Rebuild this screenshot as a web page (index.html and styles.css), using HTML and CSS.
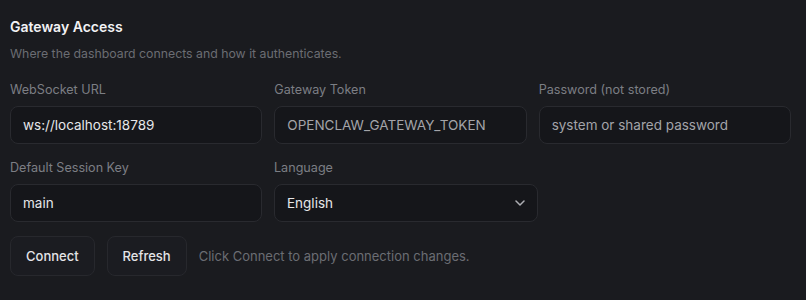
FILE: index.html
```html
<!DOCTYPE html>
<html lang="en">

<head>
    <meta charset="UTF-8">
    <meta name="viewport" content="width=device-width, initial-scale=1.0">
    <title>Gateway Access</title>
    <link rel="stylesheet" href="styles.css">
</head>

<body>
    <section class="card">
        <h2 class="card-title">Gateway Access</h2>
        <p class="card-sub">Where the dashboard connects and how it authenticates.</p>

        <div class="form-grid">
            <label class="field">
                <span class="field-label">WebSocket URL</span>
                <input type="text" value="ws://localhost:18789">
            </label>
            <label class="field">
                <span class="field-label">Gateway Token</span>
                <input type="text" placeholder="OPENCLAW_GATEWAY_TOKEN">
            </label>
            <label class="field">
                <span class="field-label">Password (not stored)</span>
                <input type="password" placeholder="system or shared password">
            </label>
        </div>

        <div class="form-grid second-row">
            <label class="field">
                <span class="field-label">Default Session Key</span>
                <input type="text" value="main">
            </label>
            <label class="field">
                <span class="field-label">Language</span>
                <span class="select-wrap">
                    <select>
                        <option>English</option>
                    </select>
                    <svg class="chevron" width="10" height="6" viewBox="0 0 10 6" fill="none">
                        <path d="M1 1l4 4 4-4" stroke="currentColor" stroke-width="1.5" stroke-linecap="round" stroke-linejoin="round"/>
                    </svg>
                </span>
            </label>
        </div>

        <div class="actions">
            <button class="btn">Connect</button>
            <button class="btn">Refresh</button>
            <span class="muted">Click Connect to apply connection changes.</span>
        </div>
    </section>
</body>

</html>
```

FILE: styles.css
```css
body {
    margin: 0;
    padding: 0;
    background-color: #1a1b1f;
    font-family: Inter, "Noto Sans", sans-serif;
    color: #e6e6e9;
}

.card {
    padding: 17px 15px 0 10px;
}

.card-title {
    margin: 0;
    font-size: 14px;
    line-height: 20px;
    font-weight: 600;
    color: #f2f2f4;
}

.card-sub {
    margin: 9px 0 0;
    font-size: 12.3px;
    line-height: 16px;
    color: #6b6d73;
}

/* fields */

.form-grid {
    display: grid;
    grid-template-columns: 1fr 1fr 1fr;
    gap: 12px;
    margin-top: 20px;
}

.form-grid.second-row {
    grid-template-columns: 252px 264px;
    margin-top: 16px;
}

.field {
    display: flex;
    flex-direction: column;
    gap: 8px;
}

.field-label {
    font-size: 12.6px;
    line-height: 16px;
    color: #7c7e84;
}

.field input,
.field select {
    width: 100%;
    height: 38px;
    box-sizing: border-box;
    padding: 0 12px;
    background-color: #15161a;
    border: 1px solid #292a2f;
    border-radius: 8px;
    color: #e6e6e9;
    font-family: inherit;
    font-size: 13.5px;
    outline: none;
}

.field input::placeholder {
    color: #a3a4a9;
}

.select-wrap {
    position: relative;
    display: block;
}

.field select {
    appearance: none;
    -webkit-appearance: none;
}

.chevron {
    position: absolute;
    right: 13px;
    top: 16px;
    color: #aeafb4;
    pointer-events: none;
}

/* buttons */

.actions {
    display: flex;
    align-items: center;
    gap: 12px;
    margin-top: 14px;
}

.btn {
    height: 40px;
    padding: 0 15px;
    background-color: #1b1c21;
    border: 1px solid #27282d;
    border-radius: 8px;
    color: #e4e4e7;
    font-family: inherit;
    font-size: 13px;
    font-weight: 500;
    cursor: pointer;
}

.muted {
    font-size: 13px;
    color: #6b6d73;
}
```
